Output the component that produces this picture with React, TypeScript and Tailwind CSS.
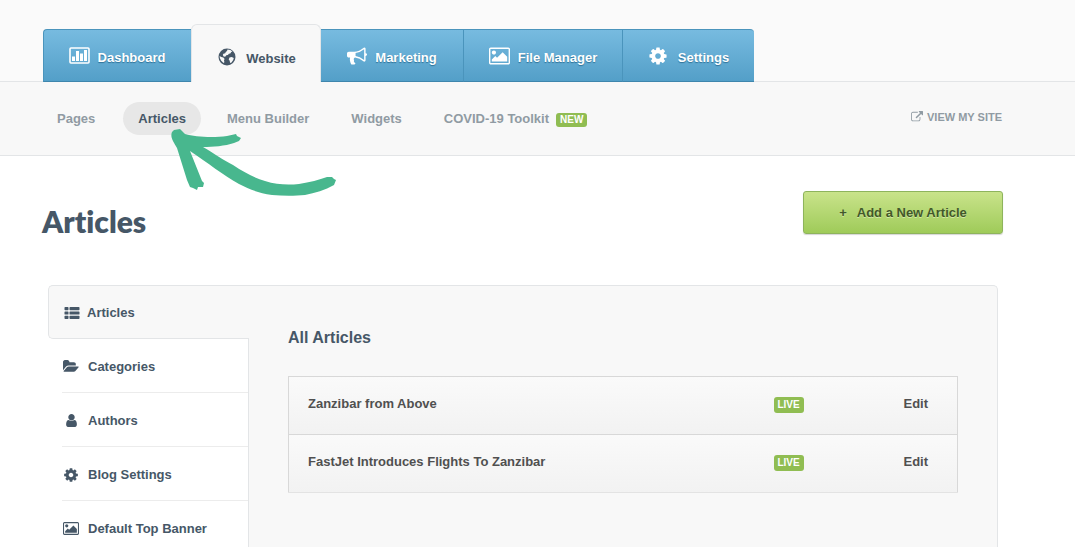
import type { ReactNode } from "react";

type IconProps = { className?: string };

function Glyph({ w, d, className }: { w: number; d: string; className?: string }) {
  return (
    <svg viewBox={`0 0 ${w} 1792`} className={className} fill="currentColor" aria-hidden="true">
      <path d={d} />
    </svg>
  );
}

const COG =
  "M1152 896q0-106-75-181t-181-75-181 75-75 181 75 181 181 75 181-75 75-181zm512-109v222q0 12-8 23t-20 13l-185 28q-19 54-39 91 35 50 107 138 10 12 10 25t-9 23q-27 37-99 108t-94 71q-12 0-26-9l-138-108q-44 23-91 38-16 136-29 186-7 28-36 28h-222q-14 0-24.5-8.5t-11.5-21.5l-28-184q-49-16-90-37l-141 107q-10 9-25 9-14 0-25-11-126-114-165-168-7-10-7-23 0-12 8-23 15-21 51-66.5t54-70.5q-27-50-41-99l-183-27q-13-2-21-12.5t-8-23.5v-222q0-12 8-23t19-13l186-28q14-46 39-92-40-57-107-138-10-12-10-24 0-10 9-23 26-36 98.5-107.5t94.5-71.5q13 0 26 10l138 107q44-23 91-38 16-136 29-186 7-28 36-28h222q14 0 24.5 8.5t11.5 21.5l28 184q49 16 90 37l142-107q9-9 24-9 13 0 25 10 129 119 165 170 7 8 7 22 0 12-8 23-15 21-51 66.5t-54 70.5q26 50 41 98l183 28q13 2 21 12.5t8 23.5z";
const PICTURE =
  "M640 576q0 80-56 136t-136 56-136-56-56-136 56-136 136-56 136 56 56 136zm1024 384v448h-1408v-192l320-320 160 160 512-512zm96-704h-1600q-13 0-22.5 9.5t-9.5 22.5v1216q0 13 9.5 22.5t22.5 9.5h1600q13 0 22.5-9.5t9.5-22.5v-1216q0-13-9.5-22.5t-22.5-9.5zm160 32v1216q0 66-47 113t-113 47h-1600q-66 0-113-47t-47-113v-1216q0-66 47-113t113-47h1600q66 0 113 47t47 113z";
const BULLHORN =
  "M1664 640q53 0 90.5 37.5t37.5 90.5-37.5 90.5-90.5 37.5v384q0 52-38 90t-90 38q-417-347-812-380-58 19-91 66t-31 100.5 40 92.5q-20 33-23 65.5t6 58 33.5 55 48 50 61.5 50.5q-29 58-111.5 83t-168.5 11.5-132-55.5q-7-23-29.5-87.5t-32-94.5-23-89-15-101 3.5-98.5 22-110.5h-122q-66 0-113-47t-47-113v-192q0-66 47-113t113-47h480q435 0 896-384 52 0 90 38t38 90v384zm-128 604v-954q-394 302-768 343v270q377 42 768 341z";
const USER =
  "M1536 1399q0 109-62.5 187t-150.5 78h-854q-88 0-150.5-78t-62.5-187q0-85 8.5-160.5t31.5-152 58.5-131 94-89 134.5-34.5q131 128 313 128t313-128q76 0 134.5 34.5t94 89 58.5 131 31.5 152 8.5 160.5zm-256-887q0 159-112.5 271.5t-271.5 112.5-271.5-112.5-112.5-271.5 112.5-271.5 271.5-112.5 271.5 112.5 112.5 271.5z";
const FOLDER =
  "M1879 952q0 31-31 66l-336 396q-43 51-120.5 86.5t-143.5 35.5h-1088q-34 0-60.5-13t-26.5-43q0-31 31-66l336-396q43-51 120.5-86.5t143.5-35.5h1088q34 0 60.5 13t26.5 43zm-343-344v160h-832q-94 0-197 47.5t-164 119.5l-337 396-5 6q0-4-.5-12.5t-.5-12.5v-960q0-92 66-158t158-66h320q92 0 158 66t66 158v32h544q92 0 158 66t66 158z";
const EXTERNAL =
  "M1408 928v320q0 119-84.5 203.5t-203.5 84.5h-832q-119 0-203.5-84.5t-84.5-203.5v-832q0-119 84.5-203.5t203.5-84.5h704q14 0 23 9t9 23v64q0 14-9 23t-23 9h-704q-66 0-113 47t-47 113v832q0 66 47 113t113 47h832q66 0 113-47t47-113v-320q0-14 9-23t23-9h64q14 0 23 9t9 23zm384-864v512q0 26-19 45t-45 19-45-19l-176-176-652 652q-10 10-23 10t-23-10l-114-114q-10-10-10-23t10-23l652-652-176-176q-19-19-19-45t19-45 45-19h512q26 0 45 19t19 45z";

function ChartIcon({ className }: IconProps) {
  return (
    <svg viewBox="0 0 21 17" className={className} fill="currentColor" aria-hidden="true">
      <rect x="1" y="1" width="19" height="15" rx="1" fill="none" stroke="currentColor" strokeWidth="1.6" />
      <rect x="3" y="9.5" width="3" height="4.5" />
      <rect x="7" y="4" width="3" height="10" />
      <rect x="11" y="6.5" width="3" height="7.5" />
      <rect x="15" y="3" width="3" height="11" />
    </svg>
  );
}

function GlobeIcon({ className }: IconProps) {
  return (
    <svg viewBox="0 0 18 18" className={className} aria-hidden="true">
      <circle cx="9" cy="9" r="8.5" fill="currentColor" />
      <path
        fill="#f8f8f8"
        d="M9.5 1.5l2.8.6 2.2 1.5-1.3.5-.9 1.4-1.4.2-1 1.3-1.6.3-1.1 1.4-1.6-.2-.8-1.4.6-1.4 1.8-.5.6-1.3 1.2-.8zM1.6 8l1.7.9 2 .5 1.3 1.5-.6 1.3.4 2-.9.7-2.3-2.1-1.3-2.6zM11.5 9.4l2.2-.4 2.1 1-.6 2.1-1.7 2.4-1.4.5-.4-2.2-1-1.4z"
      />
    </svg>
  );
}

function ListIcon({ className }: IconProps) {
  return (
    <svg viewBox="0 0 16 14" className={className} fill="currentColor" aria-hidden="true">
      <rect x="0.5" y="1" width="4" height="3.2" rx="0.7" />
      <rect x="5.5" y="1" width="10" height="3.2" rx="0.7" />
      <rect x="0.5" y="5.4" width="4" height="3.2" rx="0.7" />
      <rect x="5.5" y="5.4" width="10" height="3.2" rx="0.7" />
      <rect x="0.5" y="9.8" width="4" height="3.2" rx="0.7" />
      <rect x="5.5" y="9.8" width="10" height="3.2" rx="0.7" />
    </svg>
  );
}

// hand-drawn pointer towards the active sub menu item
function Arrow({ className }: IconProps) {
  return (
    <svg viewBox="0 0 175 76" className={className} fill="#48b78e" aria-hidden="true">
      <path d="M7 12L9 10L15 9L17 11L20 14C30 17 48 18 62 16L71 14L72 16L76 18L74 21L69 23C60 26 48 27 38 27C50 34 58 40 68 45C80 53 90 58 100 61C112 65 124 65 134 64C145 62 154 60 162 57L167 57L169 59L171 60L169 65C160 70 150 73 140 75C130 76 118 76 107 75C93 73 84 69 74 64C58 55 43 43 25 31L37 61L39 63L38 67L33 67L32 70L28 68L25 67L22 60L12 28C8 21 5 17 7 12Z" />
    </svg>
  );
}

type Tab = { label: string; icon: ReactNode; width: string };

const leftTab: Tab = { label: "Dashboard", icon: <ChartIcon className="h-[17px] w-[21px]" />, width: "w-[148px]" };

const rightTabs: Tab[] = [
  { label: "Marketing", icon: <Glyph w={1792} d={BULLHORN} className="size-5" />, width: "w-[142px]" },
  { label: "File Manager", icon: <Glyph w={1920} d={PICTURE} className="h-5 w-[21px]" />, width: "w-[159px]" },
  { label: "Settings", icon: <Glyph w={1792} d={COG} className="mr-0.5 size-5" />, width: "w-[132px]" },
];

const sideLinks = [
  { label: "Categories", icon: <Glyph w={1920} d={FOLDER} className="h-[15px] w-4" /> },
  { label: "Authors", icon: <Glyph w={1792} d={USER} className="size-[15px]" /> },
  { label: "Blog Settings", icon: <Glyph w={1792} d={COG} className="size-4" /> },
  { label: "Default Top Banner", icon: <Glyph w={1920} d={PICTURE} className="h-[15px] w-4" /> },
];

const articles = ["Zanzibar from Above", "FastJet Introduces Flights To Zanzibar"];

function BlueTab({ tab, className = "" }: { tab: Tab; className?: string }) {
  return (
    <a
      href="#"
      className={`flex h-[53px] items-center justify-center gap-2 border-y border-t-[#4a94bc] border-b-[#3f86ad] bg-linear-to-b from-[#77bbe0] to-[#539fc8] text-white text-shadow-[0_1px_1px_#2f7298] ${tab.width} ${className}`}
    >
      {tab.icon}
      <span className="pt-1">{tab.label}</span>
    </a>
  );
}

export default function App() {
  return (
    <div className="h-screen overflow-hidden bg-white font-['Liberation_Sans',Arial,sans-serif] text-[13px] leading-4 font-bold text-[#465767]">
      <header className="bg-[#fafafa] pt-6">
        <div className="border-b border-[#e3e5e7] pl-[43px]">
          <nav className="-mb-px flex items-end">
            <BlueTab tab={leftTab} className="rounded-tl border-l border-l-[#4a94bc] pr-px" />
            <a
              href="#"
              className="flex h-[58px] w-[130px] items-center justify-center gap-[10px] rounded-t-md border border-b-0 border-[#e3e5e7] bg-[#f8f8f8] pt-1.5 pl-0.5"
            >
              <GlobeIcon className="size-[18px]" />
              <span className="pt-1">Website</span>
            </a>
            {rightTabs.map((tab, i) => (
              <BlueTab
                key={tab.label}
                tab={tab}
                className={i === 2 ? "rounded-tr border-l border-l-[#4a94bc]" : i === 1 ? "border-l border-l-[#4a94bc]" : ""}
              />
            ))}
          </nav>
        </div>
      </header>

      <div className="flex h-[74px] items-center justify-between border-b border-[#e3e5e7] bg-[#f8f8f8] pr-[73px] pl-[57px] text-[#909ba3]">
        <nav className="flex items-center">
          <a href="#">Pages</a>
          <a href="#" className="relative ml-7 rounded-full bg-[#e7e7e7] px-[15px] py-2 leading-[17px] text-[#465767]">
            Articles
            <Arrow className="pointer-events-none absolute top-[18px] left-[42px] z-10 h-[76px] w-[175px] max-w-none" />
          </a>
          <a href="#" className="ml-[26px]">Menu Builder</a>
          <a href="#" className="ml-[42px]">Widgets</a>
          <a href="#" className="ml-[42px] flex items-center gap-[7px]">
            COVID-19 Toolkit
            <span className="mt-[3px] rounded-[3px] bg-[#90bd52] px-1 text-[10px] leading-[14px] text-white">NEW</span>
          </a>
        </nav>
        <a href="#" className="flex items-center gap-1 pb-1 text-[11px]">
          <Glyph w={1792} d={EXTERNAL} className="size-3" />
          VIEW MY SITE
        </a>
      </div>

      <main>
        <div className="flex items-start justify-between pt-[35px] pr-[72px] pl-[42px]">
          <h1 className="pt-3 font-[Lato,sans-serif] text-[30px] leading-9 font-extrabold [font-variant-ligatures:none]">Articles</h1>
          <button
            type="button"
            className="flex h-[43px] w-[200px] items-center justify-center gap-[10px] rounded-[3px] border border-[#8eb45c] bg-linear-to-b from-[#c9e38a] to-[#9fcb59] text-[#42582a] shadow-[0_1px_1px_#d5d5d5] text-shadow-[0_1px_0_#d2e8a5]"
          >
            <span>+</span>
            <span>Add a New Article</span>
          </button>
        </div>

        <div className="mt-[46px] mr-[77px] ml-12 flex h-[300px]">
          <aside className="w-[201px] shrink-0">
            <a
              href="#"
              className="flex h-[54px] items-center gap-[7px] rounded-l-[5px] border-y border-l border-[#e3e5e7] bg-[#f8f8f8] pt-px pl-[15px]"
            >
              <ListIcon className="h-[14px] w-4" />
              Articles
            </a>
            <div className="border-r border-[#e3e5e7] pl-[14px]">
              {sideLinks.map((link) => (
                <a key={link.label} href="#" className="flex h-[54px] items-center border-b border-[#ececec] pt-0.5 pl-px">
                  <span className="mr-[9px] flex w-4 justify-center">{link.icon}</span>
                  {link.label}
                </a>
              ))}
            </div>
          </aside>
          <section className="flex-1 rounded-tr-[5px] border-t border-r border-[#e3e5e7] bg-[#f8f8f8] px-[39px] pt-[42px]">
            <h2 className="text-base leading-5">All Articles</h2>
            <table className="mt-7 w-full table-fixed border-collapse border border-[#d8d8d8] text-[#505050]">
              <tbody>
                {articles.map((title) => (
                  <tr key={title} className="h-[58px] border-b border-[#d8d8d8] bg-linear-to-b from-[#fafafa] to-[#f2f2f2] last:border-[#e3e3e3]">
                    <td className="pb-1 pl-[19px]">{title}</td>
                    <td className="w-[130px] pb-0.5">
                      <span className="block w-[30px] rounded-[3px] bg-[#90bd52] text-center text-[10px] leading-4 text-white">LIVE</span>
                    </td>
                    <td className="w-[54px] pb-1">
                      <a href="#">Edit</a>
                    </td>
                  </tr>
                ))}
              </tbody>
            </table>
          </section>
        </div>
      </main>
    </div>
  );
}
